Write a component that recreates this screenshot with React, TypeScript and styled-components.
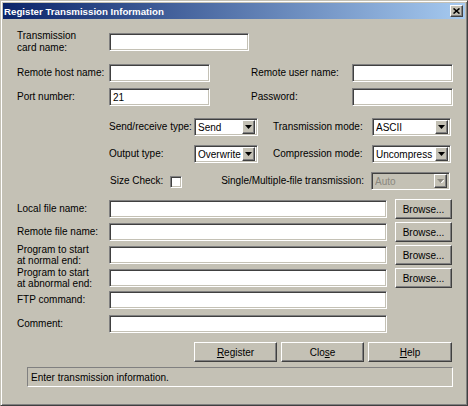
import React from 'react';
import styled, { createGlobalStyle } from 'styled-components';

const FACE = '#c4c1b5';

const GlobalStyle = createGlobalStyle`
  html, body {
    margin: 0;
    padding: 0;
    background: ${FACE};
  }
  body {
    font-family: "Liberation Sans", Arial, sans-serif;
    font-size: 10px;
    color: #000;
  }
`;

const Window = styled.div`
  width: 468px;
  height: 406px;
  box-sizing: border-box;
  background: ${FACE};
  border: 1px solid;
  border-color: ${FACE} #404040 #404040 ${FACE};
  box-shadow: inset 1px 1px 0 #fff, inset -1px -1px 0 #808080;
  padding: 2px;
  display: flex;
  flex-direction: column;
`;

const TitleBar = styled.div`
  height: 16px;
  flex-shrink: 0;
  display: flex;
  align-items: center;
  justify-content: space-between;
  padding: 0 2px 0 1px;
  background: linear-gradient(to right, #0a246a, #a6caf0);
`;

const TitleText = styled.span`
  color: #fff;
  font-weight: bold;
  font-size: 9.7px;
`;

const CloseBox = styled.div`
  width: 13px;
  height: 12px;
  box-sizing: border-box;
  background: ${FACE};
  border: 1px solid;
  border-color: #fff #404040 #404040 #fff;
  box-shadow: inset -1px -1px 0 #808080;
  display: flex;
  align-items: center;
  justify-content: center;
`;

const Body = styled.div`
  flex: 1;
  display: flex;
  flex-direction: column;
  padding: 0 13px 0 14px;
`;

const Row = styled.div<{ $mt: number; $h?: number; $indent?: number }>`
  display: flex;
  align-items: center;
  margin-top: ${p => p.$mt}px;
  height: ${p => p.$h ?? 18}px;
  padding-left: ${p => p.$indent ?? 0}px;
`;

const Label = styled.label<{ $w?: number; $ml?: number; $lh?: number; $right?: boolean; $grow?: boolean }>`
  width: ${p => (p.$w ? `${p.$w}px` : 'auto')};
  flex: ${p => (p.$grow ? '1' : '0 0 auto')};
  margin-left: ${p => p.$ml ?? 0}px;
  line-height: ${p => p.$lh ?? 12}px;
  text-align: ${p => (p.$right ? 'right' : 'left')};
  padding-right: ${p => (p.$right ? 7 : 0)}px;
  white-space: nowrap;
`;

const sunken = `
  border: 1px solid;
  border-color: #808080 #fff #fff #808080;
  box-shadow: inset 1px 1px 0 #404040, inset -1px -1px 0 ${FACE};
`;

const raised = `
  border: 1px solid;
  border-color: #fff #404040 #404040 #fff;
  box-shadow: inset -1px -1px 0 #808080;
`;

const TextBox = styled.input<{ $w: number }>`
  width: ${p => p.$w}px;
  height: 18px;
  box-sizing: border-box;
  ${sunken}
  background: #fff;
  padding: 0 0 0 3px;
  margin: 0;
  font: inherit;
  color: #000;
  outline: none;
`;

const Combo = styled.div<{ $w: number; $disabled?: boolean }>`
  width: ${p => p.$w}px;
  height: 18px;
  box-sizing: border-box;
  ${sunken}
  background: ${p => (p.$disabled ? FACE : '#fff')};
  color: ${p => (p.$disabled ? '#8a877e' : '#000')};
  display: flex;
  align-items: center;
  padding: 2px 2px 2px 3px;
  overflow: hidden;
`;

const ComboText = styled.span`
  flex: 1;
  overflow: hidden;
  white-space: nowrap;
`;

const ComboArrow = styled.div`
  width: 13px;
  height: 14px;
  flex-shrink: 0;
  box-sizing: border-box;
  background: ${FACE};
  ${raised}
  display: flex;
  align-items: center;
  justify-content: center;
`;

const CheckBox = styled.div`
  width: 12px;
  height: 12px;
  box-sizing: border-box;
  ${sunken}
  background: #fff;
  margin-top: 2px;
`;

const Button = styled.button<{ $w: number; $h?: number; $ml?: number }>`
  width: ${p => p.$w}px;
  height: ${p => p.$h ?? 20}px;
  margin: 0 0 0 ${p => p.$ml ?? 0}px;
  padding: 0;
  box-sizing: border-box;
  background: ${FACE};
  ${raised}
  font: inherit;
  color: #000;
  flex-shrink: 0;
`;

const ButtonRow = styled.div`
  display: flex;
  justify-content: flex-end;
  gap: 4px;
  margin-top: 9px;
  height: 20px;
`;

const StatusBar = styled.div`
  margin: 5px -1px 0 10px;
  height: 20px;
  box-sizing: border-box;
  border: 1px solid;
  border-color: #808080 #fff #fff #808080;
  display: flex;
  align-items: center;
  padding-left: 3px;
`;

const Arrow = ({ disabled }: { disabled?: boolean }) => (
  <svg width="7" height="4" viewBox="0 0 7 4">
    {disabled && <path d="M1 1h7L4.5 4.5z" fill="#fff" />}
    <path d="M0 0h7L3.5 4z" fill={disabled ? '#8a877e' : '#000'} />
  </svg>
);

const Select = ({ w, value, disabled }: { w: number; value: string; disabled?: boolean }) => (
  <Combo $w={w} $disabled={disabled}>
    <ComboText>{value}</ComboText>
    <ComboArrow>
      <Arrow disabled={disabled} />
    </ComboArrow>
  </Combo>
);

const FileRow = ({ mt, label, browse, lh }: { mt: number; label: React.ReactNode; browse?: boolean; lh?: number }) => (
  <Row $mt={mt} $h={browse ? 20 : 18}>
    <Label $w={92} $lh={lh}>{label}</Label>
    <TextBox $w={278} />
    {browse && <Button $w={57} $ml={8}>Browse...</Button>}
  </Row>
);

export default function App() {
  return (
    <>
      <GlobalStyle />
      <Window>
        <TitleBar>
          <TitleText>Register Transmission Information</TitleText>
          <CloseBox>
            <svg width="7" height="6" viewBox="0 0 7 6">
              <path d="M0.5 0.5L6.5 5.5M6.5 0.5L0.5 5.5" stroke="#000" strokeWidth="1.6" />
            </svg>
          </CloseBox>
        </TitleBar>
        <Body>
          <Row $mt={10} $h={26}>
            <Label $w={92}>Transmission<br />card name:</Label>
            <TextBox $w={140} />
          </Row>
          <Row $mt={9}>
            <Label $w={92}>Remote host name:</Label>
            <TextBox $w={101} />
            <Label $w={101} $ml={41}>Remote user name:</Label>
            <TextBox $w={101} />
          </Row>
          <Row $mt={6}>
            <Label $w={92}>Port number:</Label>
            <TextBox $w={101} defaultValue="21" />
            <Label $w={101} $ml={41}>Password:</Label>
            <TextBox $w={101} type="password" />
          </Row>
          <Row $mt={12} $indent={92}>
            <Label $w={85}>Send/receive type:</Label>
            <Select w={64} value="Send" />
            <Label $w={99} $ml={15}>Transmission mode:</Label>
            <Select w={79} value="ASCII" />
          </Row>
          <Row $mt={9} $indent={92}>
            <Label $w={85}>Output type:</Label>
            <Select w={64} value="Overwrite" />
            <Label $w={99} $ml={15}>Compression mode:</Label>
            <Select w={79} value="Uncompress" />
          </Row>
          <Row $mt={9} $indent={93}>
            <Label $w={60}>Size Check:</Label>
            <CheckBox />
            <Label $grow $right>Single/Multiple-file transmission:</Label>
            <Select w={79} value="Auto" disabled />
            <div style={{ width: 2 }} />
          </Row>
          <FileRow mt={9} label="Local file name:" browse />
          <FileRow mt={3} label="Remote file name:" browse />
          <FileRow mt={3} label={<>Program to start<br />at normal end:</>} lh={11} browse />
          <FileRow mt={3} label={<>Program to start<br />at abnormal end:</>} lh={11} browse />
          <FileRow mt={3} label="FTP command:" />
          <FileRow mt={6} label="Comment:" />
          <ButtonRow>
            <Button $w={83} $h={20}><u>R</u>egister</Button>
            <Button $w={83} $h={20}>Clo<u>s</u>e</Button>
            <Button $w={84} $h={20}><u>H</u>elp</Button>
          </ButtonRow>
          <StatusBar>Enter transmission information.</StatusBar>
        </Body>
      </Window>
    </>
  );
}
